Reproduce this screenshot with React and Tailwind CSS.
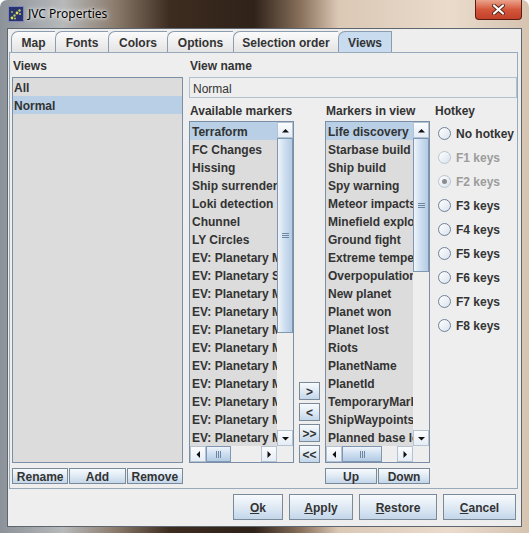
import React from 'react';

const available = [
  'Terraform', 'FC Changes', 'Hissing', 'Ship surrendered', 'Loki detection', 'Chunnel', 'LY Circles',
  'EV: Planetary Mines', 'EV: Planetary Shields', 'EV: Planetary Mines', 'EV: Planetary Mines',
  'EV: Planetary Mines', 'EV: Planetary Mines', 'EV: Planetary Mines', 'EV: Planetary Mines',
  'EV: Planetary Mines', 'EV: Planetary Mines', 'EV: Planetary Mines', 'EV: Planetary Mines',
];

const inView = [
  'Life discovery', 'Starbase build', 'Ship build', 'Spy warning', 'Meteor impacts', 'Minefield explosion',
  'Ground fight', 'Extreme temperature', 'Overpopulation', 'New planet', 'Planet won', 'Planet lost',
  'Riots', 'PlanetName', 'PlanetId', 'TemporaryMarker', 'ShipWaypoints', 'Planned base location',
];

const tabs = [
  { label: 'Map', w: 'w-[44px]' },
  { label: 'Fonts', w: 'w-[53px]' },
  { label: 'Colors', w: 'w-[59px]' },
  { label: 'Options', w: 'w-[66px]' },
  { label: 'Selection order', w: 'w-[105px]' },
  { label: 'Views', w: 'w-[54px]', active: true },
];

const hotkeys = [
  { label: 'No hotkey' },
  { label: 'F1 keys', disabled: true },
  { label: 'F2 keys', disabled: true, checked: true },
  { label: 'F3 keys' },
  { label: 'F4 keys' },
  { label: 'F5 keys' },
  { label: 'F6 keys' },
  { label: 'F7 keys' },
  { label: 'F8 keys' },
];

const Tri = ({ dir }) => {
  const d = {
    up: 'M0 4.5L3.5 1L7 4.5Z',
    down: 'M0 1L7 1L3.5 4.5Z',
    left: 'M4 0L0.5 3.5L4 7Z',
    right: 'M0.5 0L4 3.5L0.5 7Z',
  }[dir];
  const vert = dir === 'up' || dir === 'down';
  return (
    <svg width={vert ? 7 : 5} height={vert ? 5 : 7} viewBox={vert ? '0 0 7 5' : '0 0 5 7'}>
      <path d={d} fill="#111" />
    </svg>
  );
};

const ArrowBtn = ({ dir }) => (
  <div className="w-[16px] h-[16px] shrink-0 flex items-center justify-center bg-linear-to-b from-[#fbfcfe] to-[#e6edf5] border border-[#b4c2d1]">
    <Tri dir={dir} />
  </div>
);

// scroll bar with thumb size given as a class
const VScroll = ({ thumb }) => (
  <div className="w-[16px] flex flex-col bg-[#eeeeee]">
    <ArrowBtn dir="up" />
    <div className={`${thumb} shrink-0 flex items-center justify-center border border-[#7f97b3] bg-linear-to-r from-[#eef4fa] via-[#cddef0] to-[#b4cbe4]`}>
      <div className="flex flex-col gap-[1px]">
        <div className="w-[7px] h-[1px] bg-[#6d86a3]" />
        <div className="w-[7px] h-[1px] bg-[#6d86a3]" />
        <div className="w-[7px] h-[1px] bg-[#6d86a3]" />
      </div>
    </div>
    <div className="flex-1" />
    <ArrowBtn dir="down" />
  </div>
);

const HScroll = ({ thumb }) => (
  <div className="flex-1 flex bg-[#eeeeee]">
    <ArrowBtn dir="left" />
    <div className={`${thumb} shrink-0 flex items-center justify-center border border-[#7f97b3] bg-linear-to-b from-[#eef4fa] via-[#cddef0] to-[#b4cbe4]`}>
      <div className="flex gap-[1px]">
        <div className="w-[1px] h-[7px] bg-[#6d86a3]" />
        <div className="w-[1px] h-[7px] bg-[#6d86a3]" />
        <div className="w-[1px] h-[7px] bg-[#6d86a3]" />
      </div>
    </div>
    <div className="flex-1" />
    <ArrowBtn dir="right" />
  </div>
);

const ScrollList = ({ items, vThumb, hThumb }) => (
  <div className="w-[105px] h-[342px] border border-[#7a8fa6] flex flex-col">
    <div className="flex-1 flex min-h-0">
      <div className="flex-1 min-w-0 bg-[#dcdcdc] overflow-hidden">
        {items.map((it, i) => (
          <div
            key={i}
            className={`h-[18px] pl-[2px] leading-[20px] whitespace-nowrap overflow-hidden font-bold ${i === 0 ? 'bg-[#b8cfe5]' : ''}`}
          >
            {it}
          </div>
        ))}
      </div>
      <VScroll thumb={vThumb} />
    </div>
    <div className="h-[16px] flex">
      <HScroll thumb={hThumb} />
      <div className="w-[16px] bg-[#eeeeee]" />
    </div>
  </div>
);

const Btn = ({ className = '', children }) => (
  <div
    className={`flex items-center justify-center pt-[1px] border border-[#7a8a99] bg-linear-to-b from-[#f7fafd] via-[#e0eaf4] to-[#c3d6ea] font-bold ${className}`}
  >
    {children}
  </div>
);

const Radio = ({ label, disabled, checked }) => (
  <div className="h-[24px] flex items-center pl-[3px] pt-[1px] gap-[5px]">
    <div
      className={`w-[13px] h-[13px] rounded-full border flex items-center justify-center bg-linear-to-br from-[#ffffff] to-[#d8e3ee] ${
        disabled ? 'border-[#b9c4cf]' : 'border-[#6f8296]'
      }`}
    >
      {checked && <div className="w-[5px] h-[5px] rounded-full bg-[#8c8c8c]" />}
    </div>
    <span className={`font-bold ${disabled ? 'text-[#9c9c9c]' : ''}`}>{label}</span>
  </div>
);

export default function App() {
  return (
    <div className="w-[529px] h-[533px] overflow-hidden flex flex-col rounded-t-[7px] bg-[linear-gradient(90deg,#8c9299_0%,#b7b9ba_12%,#8a7a6b_22%,#3d2c20_32%,#2f2219_48%,#8a725d_57%,#dbc8b5_64%,#eadbcc_85%,#d6c3b0_100%)] font-['Liberation_Sans',Arial,sans-serif] text-[12px] text-[#333333]">
      {/* title bar */}
      <div className="h-[29px] flex items-start shrink-0">
        <div className="h-[27px] flex items-center pl-[8px]">
          <svg width="16" height="16" viewBox="0 0 16 16">
            <rect x="0.5" y="0.5" width="15" height="15" fill="#2b3270" stroke="#7d88b8" />
            <circle cx="4" cy="12" r="1.4" fill="#d8e04a" />
            <circle cx="6.5" cy="9.5" r="1.2" fill="#9fd35a" />
            <circle cx="9" cy="7" r="1.4" fill="#e8e05a" />
            <circle cx="11.5" cy="4.5" r="1.2" fill="#b6dc62" />
            <circle cx="7" cy="12.5" r="0.9" fill="#c5d44e" />
            <circle cx="12" cy="8" r="0.9" fill="#d0d85a" />
            <circle cx="4" cy="6" r="0.9" fill="#a8c850" />
          </svg>
          <span className="ml-[4px] text-[12px] text-black font-['Noto_Sans',sans-serif] [text-shadow:0_0_6px_#ffffff,0_0_3px_#ffffff]">
            JVC Properties
          </span>
        </div>
        <div className="ml-auto mr-[7px] w-[47px] h-[20px] rounded-b-[4px] border border-t-0 border-[#5a1c10] bg-linear-to-b from-[#eaa38c] via-[#d4573b] to-[#c2402a] flex items-center justify-center">
          <svg width="13" height="11" viewBox="0 0 13 11">
            <path d="M2 1.5L11 9.5M11 1.5L2 9.5" stroke="#5a2418" strokeWidth="4" strokeLinecap="round" />
            <path d="M2 1.5L11 9.5M11 1.5L2 9.5" stroke="#ffffff" strokeWidth="2.2" strokeLinecap="round" />
          </svg>
        </div>
      </div>

      {/* client area */}
      <div className="mx-[8px] h-[497px] bg-[#eeeeee] flex flex-col shadow-[0_0_0_1px_#5e6670]">
        {/* tabs */}
        <div className="flex pt-[2px] pl-[3px]">
          {tabs.map((t) => (
            <div
              key={t.label}
              className={`${t.w} h-[21px] pt-[2px] flex items-center justify-center border-t border-l border-[#8c9db0] rounded-tl-[7px] font-bold ${
                t.active ? 'bg-[#c8dbef] border-r' : 'bg-linear-to-b from-[#fbfbfb] to-[#e4e4e4]'
              }`}
            >
              {t.label}
            </div>
          ))}
        </div>

        {/* tab panel */}
        <div className="ml-[1px] w-[509px] h-[437px] border border-[#9aa9b9] flex pl-[2px]">
          {/* views column */}
          <div className="w-[171px] flex flex-col">
            <div className="h-[24px] pt-[2px] flex items-center pl-[1px] font-bold">Views</div>
            <div className="h-[386px] border border-[#7a8fa6] bg-[#dcdcdc]">
              <div className="h-[18px] pl-[1px] leading-[20px] font-bold">All</div>
              <div className="h-[18px] pl-[1px] leading-[20px] font-bold bg-[#b8cfe5]">Normal</div>
            </div>
            <div className="mt-[5px] h-[16px] flex gap-[1px]">
              <Btn className="flex-1">Rename</Btn>
              <Btn className="flex-1">Add</Btn>
              <Btn className="flex-1">Remove</Btn>
            </div>
          </div>

          {/* right area */}
          <div className="ml-[6px] w-[328px] flex flex-col">
            <div className="h-[24px] pt-[2px] flex items-center pl-[1px] font-bold">View name</div>
            <div className="h-[21px] pt-[2px] border border-[#b3c1cf] bg-[#eeeeee] flex items-center pl-[3px]">Normal</div>
            <div className="flex">
              <div className="w-[105px] flex flex-col">
                <div className="h-[23px] pt-[2px] flex items-center pl-[1px] font-bold whitespace-nowrap">Available markers</div>
                <ScrollList items={available} vThumb="h-[195px]" hThumb="w-[25px]" />
              </div>
              <div className="ml-[5px] w-[21px] flex flex-col justify-end gap-[3px] h-[365px]">
                <Btn className="h-[18px] leading-none">&gt;</Btn>
                <Btn className="h-[18px] leading-none">&lt;</Btn>
                <Btn className="h-[18px] leading-none">&gt;&gt;</Btn>
                <Btn className="h-[18px] leading-none">&lt;&lt;</Btn>
              </div>
              <div className="ml-[5px] w-[105px] flex flex-col">
                <div className="h-[23px] pt-[2px] flex items-center pl-[1px] font-bold whitespace-nowrap">Markers in view</div>
                <ScrollList items={inView} vThumb="h-[134px]" hThumb="w-[40px]" />
                <div className="mt-[5px] h-[16px] flex gap-[1px]">
                  <Btn className="flex-1">Up</Btn>
                  <Btn className="flex-1">Down</Btn>
                </div>
              </div>
              <div className="ml-[5px] flex-1 flex flex-col">
                <div className="h-[23px] pt-[2px] flex items-center font-bold">Hotkey</div>
                {hotkeys.map((h) => (
                  <Radio key={h.label} {...h} />
                ))}
              </div>
            </div>
          </div>
        </div>

        {/* dialog buttons */}
        <div className="mt-[5px] flex justify-end gap-[6px] pr-[5px]">
          <Btn className="w-[50px] h-[26px]"><span><u>O</u>k</span></Btn>
          <Btn className="w-[64px] h-[26px]"><span><u>A</u>pply</span></Btn>
          <Btn className="w-[78px] h-[26px]"><span><u>R</u>estore</span></Btn>
          <Btn className="w-[73px] h-[26px]"><span><u>C</u>ancel</span></Btn>
        </div>
      </div>
    </div>
  );
}
